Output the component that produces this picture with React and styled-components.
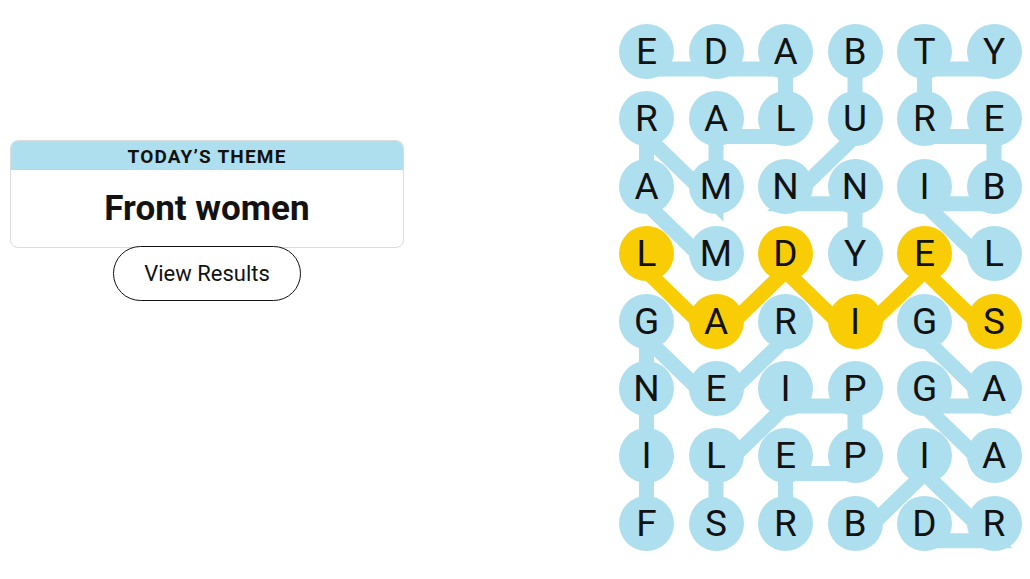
import styled, { createGlobalStyle } from 'styled-components'

const BLUE = '#aedfee'
const YELLOW = '#f8cd05'

// letra por fila, de arriba abajo
const LETTERS = [
  'EDABTY',
  'RALURE',
  'AMNNIB',
  'LMDYEL',
  'GARIGS',
  'NEIPGA',
  'ILEPIA',
  'FSRBDR'
]

const CELL = 55
const COL_STEP = 69.5
const ROW_STEP = 67.4
const LINE_DROP = 17.5

// palabras encontradas, como lista de [fila, columna]
const WORDS = [
  { cells: [[3, 1], [2, 0], [1, 0], [2, 1], [1, 1], [1, 2], [0, 2], [0, 1], [0, 0]] },
  { cells: [[0, 3], [1, 3], [2, 2], [2, 3], [3, 3]] },
  { cells: [[3, 5], [2, 4], [2, 5], [1, 5], [1, 4], [0, 4], [0, 5]] },
  { cells: [[7, 0], [6, 0], [5, 0], [4, 0], [5, 1], [4, 2]] },
  { cells: [[7, 1], [6, 1], [5, 2], [5, 3], [6, 3], [6, 2], [7, 2]] },
  { cells: [[4, 4], [5, 5], [5, 4], [6, 5]] },
  { cells: [[7, 3], [6, 4], [7, 5], [7, 4]] },
  { cells: [[3, 0], [4, 1], [3, 2], [4, 3], [3, 4], [4, 5]], spangram: true }
]

const spangramCells = new Set(
  WORDS.filter((w) => w.spangram).flatMap((w) => w.cells.map(([r, c]) => `${r}-${c}`))
)

const toPoints = (cells) =>
  cells
    .map(([r, c]) => `${CELL / 2 + c * COL_STEP},${CELL / 2 + r * ROW_STEP + LINE_DROP}`)
    .join(' ')

const GlobalStyle = createGlobalStyle`
  body {
    margin: 0;
    background: #fff;
    font-family: Roboto, "Liberation Sans", sans-serif;
    color: #121212;
  }
`

const Page = styled.main`
  display: flex;
  align-items: flex-start;
  width: 1030px;
  height: 579px;
  overflow: hidden;
`

const Sidebar = styled.section`
  width: 394px;
  margin: 140px 0 0 10px;
  display: flex;
  flex-direction: column;
  align-items: center;
`

const ThemeCard = styled.div`
  width: 100%;
  border: 1px solid #dcdcdc;
  border-radius: 8px;
  overflow: hidden;
  box-sizing: border-box;
`

const ThemeLabel = styled.div`
  height: 30px;
  margin: -1px -1px 0;
  background: ${BLUE};
  display: flex;
  align-items: center;
  justify-content: center;
  font-size: 19px;
  font-weight: 700;
  letter-spacing: 1.2px;
  text-transform: uppercase;
  padding-top: 3px;
  box-sizing: border-box;
`

const ThemeName = styled.h1`
  margin: 0;
  height: 77px;
  display: flex;
  align-items: center;
  justify-content: center;
  font-size: 35px;
  font-weight: 700;
  letter-spacing: 0;
`

const ResultsButton = styled.button`
  margin-top: -2px;
  width: 188px;
  height: 55px;
  border: 1px solid #121212;
  border-radius: 28px;
  background: #fff;
  font-family: inherit;
  font-size: 22px;
  color: #121212;
  cursor: pointer;
`

const Board = styled.section`
  position: relative;
  margin: 24px 0 0 215px;
  display: grid;
  grid-template-columns: repeat(6, ${CELL}px);
  grid-auto-rows: ${CELL}px;
  column-gap: ${COL_STEP - CELL}px;
  row-gap: ${ROW_STEP - CELL}px;
`

const Lines = styled.svg`
  position: absolute;
  left: 0;
  top: 0;
  width: 100%;
  height: 100%;
  overflow: visible;
  z-index: 0;
`

const Letter = styled.div`
  position: relative;
  z-index: 1;
  width: ${CELL}px;
  height: ${CELL}px;
  border-radius: 50%;
  background: ${({ $spangram }) => ($spangram ? YELLOW : BLUE)};
  display: flex;
  align-items: center;
  justify-content: center;
  font-size: 37px;
  color: #121212;
  box-sizing: border-box;
`

const App = () => {
  return (
    <Page>
      <GlobalStyle />
      <Sidebar>
        <ThemeCard>
          <ThemeLabel>Today’s theme</ThemeLabel>
          <ThemeName>Front women</ThemeName>
        </ThemeCard>
        <ResultsButton>View Results</ResultsButton>
      </Sidebar>
      <Board>
        <Lines>
          {WORDS.map((w, i) => (
            <polyline
              key={i}
              points={toPoints(w.cells)}
              fill='none'
              stroke={w.spangram ? YELLOW : BLUE}
              strokeWidth='15'
              strokeLinejoin='miter'
              strokeLinecap='butt'
            />
          ))}
        </Lines>
        {LETTERS.map((row, r) =>
          row.split('').map((ch, c) => (
            <Letter key={`${r}-${c}`} $spangram={spangramCells.has(`${r}-${c}`)}>
              {ch}
            </Letter>
          ))
        )}
      </Board>
    </Page>
  )
}

export default App
